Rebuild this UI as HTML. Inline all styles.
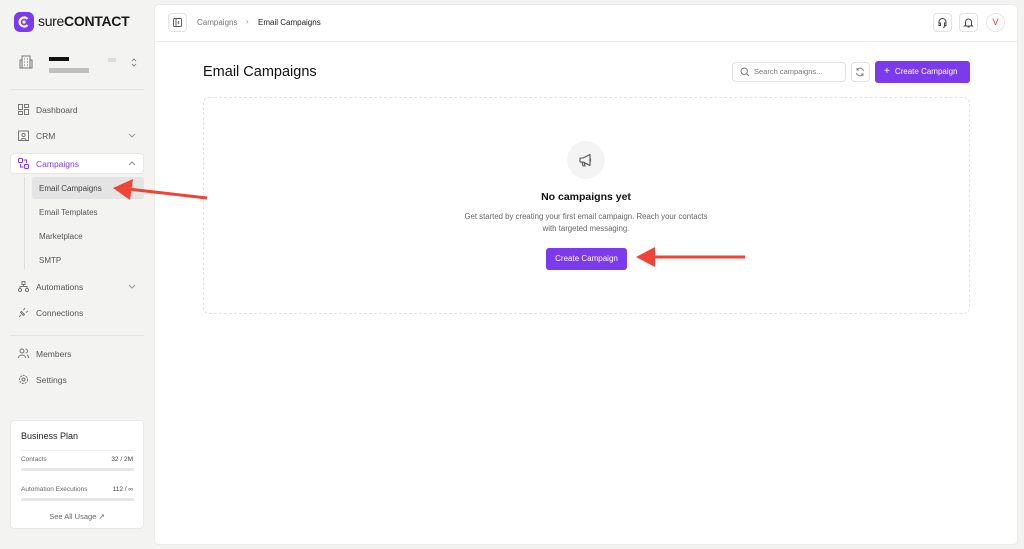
<!DOCTYPE html>
<html><head><meta charset="utf-8"><style>
*{box-sizing:border-box;margin:0;padding:0}
body{width:1024px;height:549px;background:#f3f3f2;font-family:"Liberation Sans",sans-serif;position:relative;overflow:hidden;color:#111}
.a{position:absolute}
.nav{font-size:8.5px;color:#555;display:flex;align-items:center}
.ico{position:absolute;left:18px;width:11px;height:11px}
.sub{position:absolute;left:39px;font-size:8px;color:#555}
svg{display:block}
</style></head><body>
<div class="a" style="left:14px;top:12px;width:20px;height:20px;border-radius:6px;background:#7c3aed"></div>
<svg class="a" style="left:14px;top:12px" width="20" height="20" viewBox="0 0 20 20"><path d="M13.5 7a4.5 4.5 0 1 0 0 6" stroke="#fff" stroke-width="2.2" fill="none"/><circle cx="10" cy="10" r="1.6" fill="#fff"/></svg>
<div class="a" style="left:38px;top:13px;font-size:14px;color:#1a1a1a;letter-spacing:-0.3px">sure<b style="font-weight:600">CONTACT</b></div>
<svg class="a" style="left:19px;top:55px" width="14" height="14" viewBox="0 0 14 14" fill="none" stroke="#777" stroke-width="1"><rect x="3" y="1" width="8" height="12"/><path d="M1 5h2v8H1zM11 5h2v8h-2M5 4h1M8 4h1M5 7h1M8 7h1M5 10h1M8 10h1"/></svg>
<div class="a" style="left:49px;top:57px;width:20px;height:4px;background:#111"></div>
<div class="a" style="left:49px;top:68px;width:40px;height:5px;background:#aaa;opacity:.7"></div>
<div class="a" style="left:108px;top:58px;width:8px;height:4px;background:#ddd"></div>
<svg class="a" style="left:130px;top:57px" width="8" height="11" viewBox="0 0 8 11" fill="none" stroke="#888"><path d="M2 4l2-2 2 2M2 7l2 2 2-2"/></svg>
<div class="a" style="left:10px;top:89px;width:134px;height:1px;background:#e2e2e2"></div>
<svg class="ico" style="top:104px" viewBox="0 0 11 11" fill="none" stroke="#777"><rect x=".5" y=".5" width="4" height="5"/><rect x="6.5" y=".5" width="4" height="3"/><rect x=".5" y="7.5" width="4" height="3"/><rect x="6.5" y="5.5" width="4" height="5"/></svg>
<div class="a nav" style="left:36px;top:105px">Dashboard</div>
<svg class="ico" style="top:130px" viewBox="0 0 11 11" fill="none" stroke="#777"><rect x=".5" y="1" width="10" height="9.5"/><circle cx="5.5" cy="5" r="1.6"/><path d="M3 10c0-2 5-2 5 0"/></svg>
<div class="a nav" style="left:36px;top:131px">CRM</div>
<svg class="a" style="left:128px;top:133px" width="8" height="5" viewBox="0 0 8 5" fill="none" stroke="#999"><path d="M1 1l3 3 3-3"/></svg>
<div class="a" style="left:10px;top:153px;width:134px;height:21px;background:#fff;border:1px solid #e6e6e6;border-radius:4px"></div>
<svg class="ico" style="top:158px" viewBox="0 0 11 11" fill="none" stroke="#7c3aed"><rect x=".5" y=".5" width="4" height="4" rx="1"/><rect x="6.5" y="6.5" width="4" height="4" rx="1"/><path d="M2.5 6v3h3M8.5 5V2h-3"/></svg>
<div class="a nav" style="left:36px;top:159px;color:#7c3aed">Campaigns</div>
<svg class="a" style="left:128px;top:161px" width="8" height="5" viewBox="0 0 8 5" fill="none" stroke="#888"><path d="M1 4l3-3 3 3"/></svg>
<div class="a" style="left:24px;top:177px;width:1px;height:92px;background:#ddd"></div>
<div class="a" style="left:32px;top:177px;width:112px;height:22px;background:#e4e4e4;border-radius:3px"></div>
<div class="sub" style="top:184px;color:#444">Email Campaigns</div>
<div class="sub" style="top:208px">Email Templates</div>
<div class="sub" style="top:232px">Marketplace</div>
<div class="sub" style="top:256px">SMTP</div>
<svg class="ico" style="top:281px" viewBox="0 0 11 11" fill="none" stroke="#777"><rect x="4" y=".5" width="3" height="3"/><circle cx="2" cy="9" r="1.5"/><circle cx="9" cy="9" r="1.5"/><path d="M5.5 3.5v2M2 7.5V5.5h7v2"/></svg>
<div class="a nav" style="left:36px;top:282px">Automations</div>
<svg class="a" style="left:128px;top:284px" width="8" height="5" viewBox="0 0 8 5" fill="none" stroke="#999"><path d="M1 1l3 3 3-3"/></svg>
<svg class="ico" style="top:307px" viewBox="0 0 11 11" fill="none" stroke="#777"><path d="M1 10l2-2M2.5 5.5l3 3 1-1-3-3zM7 1l-1.5 2M10 4l-2 1.5"/></svg>
<div class="a nav" style="left:36px;top:308px">Connections</div>
<div class="a" style="left:10px;top:335px;width:134px;height:1px;background:#e2e2e2"></div>
<svg class="ico" style="top:348px" viewBox="0 0 11 11" fill="none" stroke="#777"><circle cx="4" cy="3" r="2"/><path d="M.5 10c0-4 7-4 7 0M7.5 1a2 2 0 0 1 0 4M9 7c1 .5 1.5 1.5 1.5 3"/></svg>
<div class="a nav" style="left:36px;top:349px">Members</div>
<svg class="ico" style="top:374px" viewBox="0 0 11 11" fill="none" stroke="#777"><circle cx="5.5" cy="5.5" r="4" stroke-dasharray="2 1"/><circle cx="5.5" cy="5.5" r="1.5"/></svg>
<div class="a nav" style="left:36px;top:375px">Settings</div>
<div class="a" style="left:10px;top:420px;width:134px;height:109px;background:#fff;border:1px solid #e8e8e8;border-radius:4px">
<div class="a" style="left:10px;top:10px;font-size:9px;color:#222">Business Plan</div>
<div class="a" style="left:10px;top:29px;width:113px;height:1px;background:#eee"></div>
<div class="a" style="left:10px;top:35px;font-size:6.5px;color:#666">Contacts</div>
<div class="a" style="right:10px;top:35px;font-size:6.5px;color:#444">32 / 2M</div>
<div class="a" style="left:10px;top:47px;width:113px;height:3px;border-radius:2px;background:#e6e6e6"></div>
<div class="a" style="left:10px;top:65px;font-size:6.5px;color:#666">Automation Executions</div>
<div class="a" style="right:10px;top:65px;font-size:6.5px;color:#444">112 / ∞</div>
<div class="a" style="left:10px;top:77px;width:113px;height:3px;border-radius:2px;background:#e6e6e6"></div>
<div class="a" style="left:0;width:132px;top:91px;text-align:center;font-size:7.5px;color:#666">See All Usage ↗</div>
</div>
<div class="a" style="left:154px;top:4px;width:864px;height:541px;background:#fff;border-radius:5px;border:1px solid #eaeaea"></div>
<div class="a" style="left:155px;top:41px;width:862px;height:1px;background:#ebebeb"></div>
<div class="a" style="left:168px;top:13px;width:19px;height:19px;border:1px solid #e2e2e2;border-radius:4px"></div>
<svg class="a" style="left:173px;top:18px" width="9" height="9" viewBox="0 0 9 9" fill="none" stroke="#555" stroke-width=".9"><rect x=".5" y=".5" width="8" height="8" rx="1"/><path d="M3 .5v8M6 3L5 4.5 6 6"/></svg>
<div class="a" style="left:197px;top:18px;font-size:8px;color:#777">Campaigns</div>
<div class="a" style="left:246px;top:17px;font-size:8px;color:#999">›</div>
<div class="a" style="left:258px;top:18px;font-size:8px;color:#222">Email Campaigns</div>
<div class="a" style="left:933px;top:13px;width:19px;height:19px;border:1px solid #e2e2e2;border-radius:4px"></div>
<svg class="a" style="left:937px;top:17px" width="11" height="11" viewBox="0 0 11 11" fill="none" stroke="#444"><path d="M2 7V5a3.5 3.5 0 0 1 7 0v2M2 6h1.5v2.5H2zM7.5 6H9v2.5H7.5zM8 9c0 1-1 1.3-2 1.3"/></svg>
<div class="a" style="left:959px;top:13px;width:19px;height:19px;border:1px solid #e2e2e2;border-radius:4px"></div>
<svg class="a" style="left:963px;top:17px" width="11" height="11" viewBox="0 0 11 11" fill="none" stroke="#444"><path d="M2.5 8V5a3 3 0 0 1 6 0v3l1 1h-8zM4.5 10h2"/></svg>
<div class="a" style="left:986px;top:13px;width:19px;height:19px;border:1px solid #e6e6e6;border-radius:50%;color:#e53935;font-size:9px;text-align:center;line-height:17px">V</div>
<div class="a" style="left:203px;top:64px;font-size:14.5px;color:#111">Email Campaigns</div>
<div class="a" style="left:732px;top:62px;width:114px;height:20px;border:1px solid #e2e2e2;border-radius:4px"></div>
<svg class="a" style="left:740px;top:67px" width="10" height="10" viewBox="0 0 10 10" fill="none" stroke="#777"><circle cx="4.2" cy="4.2" r="3.2"/><path d="M6.5 6.5L9 9"/></svg>
<div class="a" style="left:754px;top:67px;font-size:7.5px;color:#777">Search campaigns...</div>
<div class="a" style="left:851px;top:62px;width:19px;height:20px;border:1px solid #e2e2e2;border-radius:4px"></div>
<svg class="a" style="left:855px;top:67px" width="10" height="10" viewBox="0 0 10 10" fill="none" stroke="#888"><path d="M8.5 4A3.5 3.5 0 0 0 2 3M1.5 6A3.5 3.5 0 0 0 8 7M2 1v2h2M8 9V7H6"/></svg>
<div class="a" style="left:875px;top:61px;width:95px;height:22px;background:#7c3aed;border-radius:3px;color:#fff;font-size:8px;line-height:22px;padding-left:9px"><span style="font-size:10px;margin-right:5px">+</span>Create Campaign</div>
<div class="a" style="left:203px;top:97px;width:767px;height:217px;border:1px dashed #e2e2e2;border-radius:6px"></div>
<div class="a" style="left:567px;top:141px;width:38px;height:38px;border-radius:50%;background:#f4f4f4"></div>
<svg class="a" style="left:578px;top:152px" width="16" height="16" viewBox="0 0 16 16" fill="none" stroke="#555" stroke-width="1.1" stroke-linejoin="round"><path d="M2 6h3l7-3.5v11L5 10H2zM12.5 6.5v3M4 10l1 4h2l-1-4"/></svg>
<div class="a" style="left:403px;width:366px;top:191px;text-align:center;font-size:10.5px;font-weight:bold;color:#111">No campaigns yet</div>
<div class="a" style="left:403px;width:366px;top:211px;text-align:center;font-size:7.8px;color:#666;line-height:12px">Get started by creating your first email campaign. Reach your contacts<br>with targeted messaging.</div>
<div class="a" style="left:546px;top:248px;width:81px;height:22px;background:#7c3aed;border-radius:3px;color:#fff;font-size:8px;line-height:22px;text-align:center">Create Campaign</div>
<svg class="a" style="left:0;top:0" width="1024" height="549"><g fill="#f04438" stroke="#f04438"><path d="M207 198L128 189" stroke-width="3"/><path d="M113 188l20-9-3 21z" stroke="none"/><path d="M745 257H650" stroke-width="3"/><path d="M636 257l19-10v20z" stroke="none"/></g></svg>
</body></html>
